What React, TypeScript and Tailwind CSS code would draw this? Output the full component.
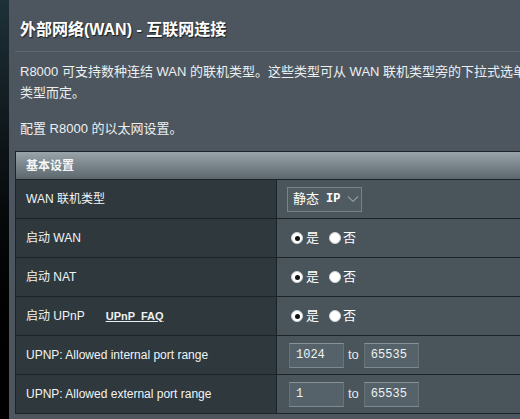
import { ReactNode } from 'react';

const font = { fontFamily: '"Liberation Sans", "Noto Sans CJK SC", sans-serif' };

function Radio({ checked }: { checked?: boolean }) {
  return (
    <span className="w-[12px] h-[12px] rounded-full bg-white border border-[#cfd4d6] flex items-center justify-center shrink-0">
      {checked && <span className="w-[5px] h-[5px] rounded-full bg-[#111]" />}
    </span>
  );
}

function YesNo() {
  return (
    <div className="flex items-center text-[13px] text-white">
      <span className="ml-[4px]"><Radio checked /></span>
      <span className="ml-[3px]">是</span>
      <span className="ml-[10px]"><Radio /></span>
      <span className="ml-[2px]">否</span>
    </div>
  );
}

function PortInput({ value }: { value: string }) {
  return (
    <div className="w-[55px] h-[25px] bg-[#56626a] border border-[#66737a] border-t-[#85929a] border-b-[#7d8a91] flex items-center pl-[6px] text-[12px] text-[#eef3f4] font-['Liberation_Mono',monospace]">
      {value}
    </div>
  );
}

function Row({ label, children }: { label: ReactNode; children: ReactNode }) {
  return (
    <div className="flex h-[39px] border-t border-[#1c2428]">
      <div className="w-[261px] shrink-0 bg-[#2e383d] border-r border-[#1c2428] flex items-center pl-[10px] text-[12px] text-[#f2f4f5]">
        {label}
      </div>
      <div className="flex-1 bg-[#4a555b] flex items-center pl-[10px]">{children}</div>
    </div>
  );
}

function PortRange({ from, to }: { from: string; to: string }) {
  return (
    <div className="flex items-center ml-[2px]">
      <PortInput value={from} />
      <span className="ml-[4px] mr-[5px] text-[13px] text-[#e4e9eb]">to</span>
      <PortInput value={to} />
    </div>
  );
}

export default function App() {
  return (
    <div className="w-[520px] h-[419px] overflow-hidden flex bg-[#4d565e]" style={font}>
      {/* dark strip on the left */}
      <div className="w-[9px] shrink-0 bg-gradient-to-b from-[#1e3038] via-[#070a0c] to-black" />

      <div className="w-[760px] shrink-0 pl-[6px] pt-[20px]">
        <h1 className="ml-[5px] text-[16px] leading-[20px] font-bold text-white [text-shadow:1px_1px_1px_#1a1f22]">
          外部网络(WAN) - 互联网连接
        </h1>
        <div className="mt-[11px] h-px bg-[#2c3337] border-b border-[#5f6870]" />

        <p className="mt-[9px] ml-[5px] text-[13px] leading-[21px] text-[#eceff0] whitespace-nowrap">
          R8000 可支持数种连结 WAN 的联机类型。这些类型可从 WAN 联机类型旁的下拉式选单中选择。
          <br />
          类型而定。
        </p>
        <p className="mt-[15px] ml-[5px] text-[13px] leading-[21px] text-[#eceff0]">配置 R8000 的以太网设置。</p>

        <div className="mt-[12px] border border-[#1c2428] border-t-0">
          <div className="h-[28px] border-t border-[#1c2428] bg-gradient-to-b from-[#98a4a9] to-[#5d686e] flex items-center pl-[10px] text-[12px] font-bold text-[#f4f6f7]">
            基本设置
          </div>

          <Row label="WAN 联机类型">
            <div className="h-[25px] w-[75px] border border-[#76838a] bg-[#4f5b61] flex items-center pl-[5px] text-[13px] text-white">
              <span>静态</span>
              <span className="ml-[7px] font-bold text-[12px] font-['Liberation_Mono',monospace]">IP</span>
              <svg className="ml-[7px]" width="12" height="8" viewBox="0 0 12 8" fill="none">
                <path d="M1 1.5 L6 6.5 L11 1.5" stroke="#8d989e" strokeWidth="1.2" />
              </svg>
            </div>
          </Row>

          <Row label="启动 WAN">
            <YesNo />
          </Row>

          <Row label="启动 NAT">
            <YesNo />
          </Row>

          <Row
            label={
              <>
                <span>启动 UPnP</span>
                <a href="#" className="ml-[21px] text-[11px] font-bold underline text-[#eef1f2] [word-spacing:3px]">
                  UPnP FAQ
                </a>
              </>
            }
          >
            <YesNo />
          </Row>

          <Row label="UPNP: Allowed internal port range">
            <PortRange from="1024" to="65535" />
          </Row>

          <Row label="UPNP: Allowed external port range">
            <PortRange from="1" to="65535" />
          </Row>
        </div>
      </div>
    </div>
  );
}
